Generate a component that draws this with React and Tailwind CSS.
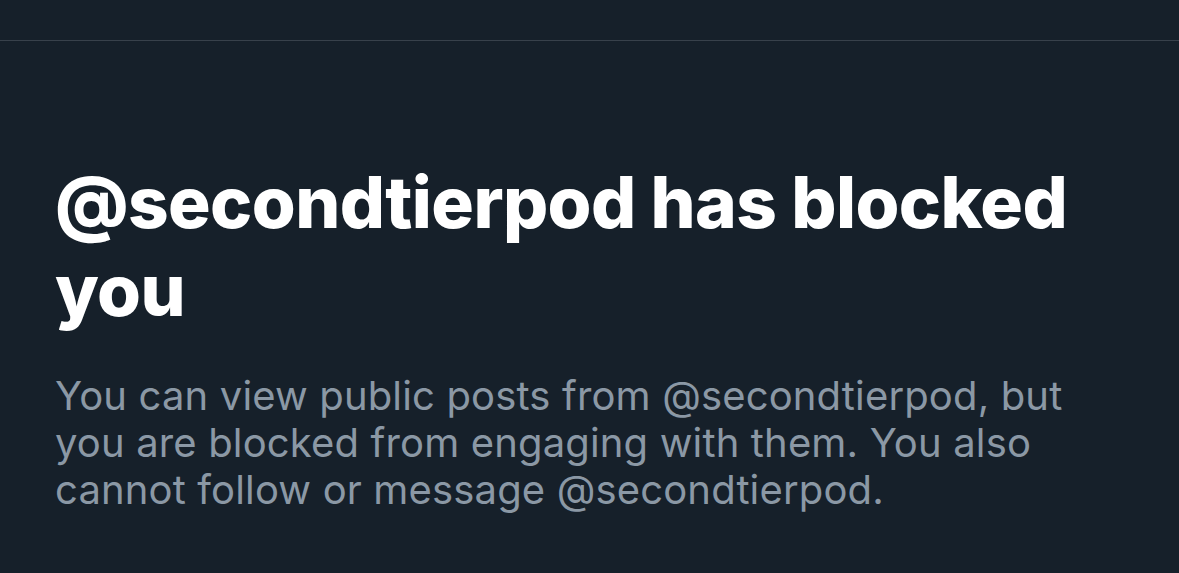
import React from 'react';

const App = () => {
  return (
    <div
      className="w-[1179px] h-[573px] overflow-hidden bg-[#16202a]"
      style={{ fontFamily: 'Inter, "Liberation Sans", sans-serif' }}
    >
      {/* top bar */}
      <div className="h-[41px] border-b border-[#38414b]" />

      {/* blocked message */}
      <div className="pl-[55px] pr-[50px] pt-[117px]">
        <h1 className="text-[71px] leading-[88px] font-extrabold text-white tracking-[-0.6px]">
          @secondtierpod has blocked you
        </h1>
        <p className="mt-[38px] text-[40px] leading-[47px] text-[#8b98a5] tracking-[0.15px] pr-[50px]">
          You can view public posts from @secondtierpod, but you are blocked from engaging with them. You also
          cannot follow or message @secondtierpod.
        </p>
      </div>
    </div>
  );
};

export default App;
